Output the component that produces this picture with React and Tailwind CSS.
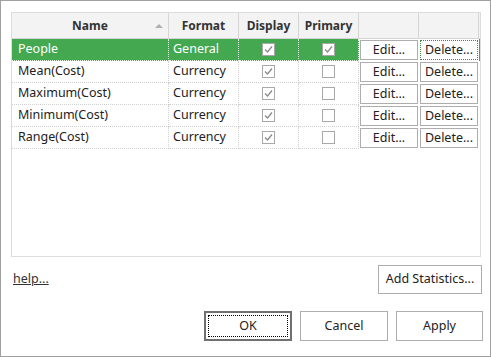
import React from "react";

const rows = [
  { name: "People", format: "General", display: true, primary: true },
  { name: "Mean(Cost)", format: "Currency", display: true, primary: false },
  { name: "Maximum(Cost)", format: "Currency", display: true, primary: false },
  { name: "Minimum(Cost)", format: "Currency", display: true, primary: false },
  { name: "Range(Cost)", format: "Currency", display: true, primary: false },
];

function Check({ checked }) {
  return (
    <div className="w-[13px] h-[13px] border border-[#a8a8a8] bg-white flex items-center justify-center">
      {checked && (
        <svg width="9" height="9" viewBox="0 0 9 9">
          <path d="M1 4.5 L3.5 7 L8 1.5" fill="none" stroke="#8a8a8a" strokeWidth="1.3" />
        </svg>
      )}
    </div>
  );
}

export default function App() {
  const cols = "grid-cols-[157px_70px_60px_60px_60px_60px]";
  return (
    <div className="w-[491px] h-[357px] bg-white border border-[#a0a0a0] text-[12.5px] text-[#222]" style={{ fontFamily: '"Noto Sans", "Open Sans", sans-serif' }}>
      <div className="ml-[10px] mt-[11px] w-[470px] h-[245px] border border-[#dcdcdc] bg-white">
        <div className={`grid ${cols} h-[26px] bg-[#f3f3f3] border-b border-[#d5d5d5] font-bold text-[12px] text-[#333]`}>
          <div className="relative flex items-center justify-center border-r border-[#d5d5d5]">
            Name
            <svg className="absolute right-[5px] top-[10px]" width="8" height="5" viewBox="0 0 8 5"><path d="M0 5 L4 1 L8 5 Z" fill="#b0b0b0" /></svg>
          </div>
          <div className="flex items-center justify-center border-r border-[#d5d5d5]">Format</div>
          <div className="flex items-center justify-center border-r border-[#d5d5d5]">Display</div>
          <div className="flex items-center justify-center border-r border-[#d5d5d5]">Primary</div>
          <div className="border-r border-[#d5d5d5]"></div>
          <div className="border-r border-[#d5d5d5]"></div>
        </div>
        {rows.map((r, i) => {
          const sel = i === 0;
          const cell = `h-[22px] flex items-center border-r border-b border-dotted ${sel ? "border-[#e6f2e6]" : "border-[#d0d0d0]"}`;
          return (
            <div key={r.name} className={`grid ${cols} ${sel ? "bg-[#43a84f] text-white" : ""}`}>
              <div className={`${cell} pl-[6px]`}>{r.name}</div>
              <div className={`${cell} pl-[4px]`}>{r.format}</div>
              <div className={`${cell} justify-center`}><Check checked={r.display} /></div>
              <div className={`${cell} justify-center`}><Check checked={r.primary} /></div>
              <div className="h-[22px] p-[1px] bg-white">
                <div className="h-full border border-[#adadad] bg-white text-[#222] flex items-center justify-center">Edit...</div>
              </div>
              <div className="h-[22px] p-[1px] bg-white">
                <div className={`h-full border ${sel ? "border-dotted border-[#3a8a44]" : "border-[#adadad]"} bg-white text-[#222] flex items-center justify-center`}>Delete...</div>
              </div>
            </div>
          );
        })}
      </div>
      <div className="flex items-center justify-between ml-[12px] mr-[8px] mt-[8px]">
        <span className="underline text-[#333]">help...</span>
        <button className="w-[104px] h-[29px] border border-[#adadad] bg-white text-[#222]">Add Statistics...</button>
      </div>
      <div className="flex justify-end gap-[8px] mr-[7px] mt-[17px]">
        <button className="w-[88px] h-[30px] border-2 border-[#707070] bg-white p-[2px]">
          <div className="w-full h-full border border-dotted border-black flex items-center justify-center text-[#222]">OK</div>
        </button>
        <button className="w-[88px] h-[30px] border border-[#adadad] bg-white text-[#222]">Cancel</button>
        <button className="w-[87px] h-[30px] border border-[#adadad] bg-white text-[#222]">Apply</button>
      </div>
    </div>
  );
}
